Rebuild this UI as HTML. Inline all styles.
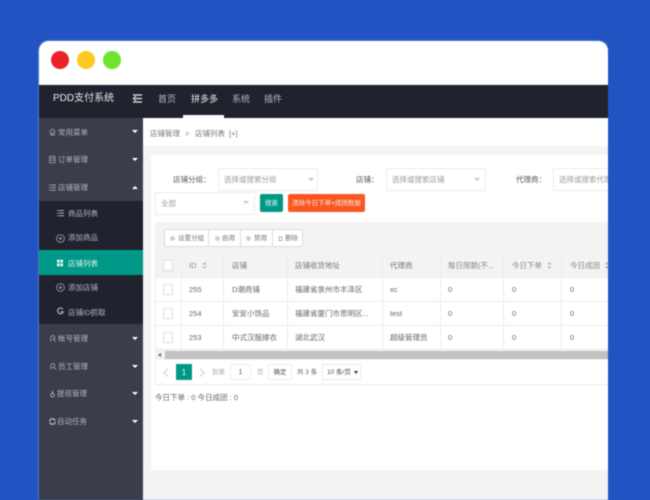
<!DOCTYPE html>
<html lang="zh">
<head>
<meta charset="utf-8">
<style>
html,body{margin:0;padding:0}
body{width:650px;height:500px;overflow:hidden;background:#2154c2;position:relative;font-family:"Liberation Sans","Noto Sans CJK SC",sans-serif}
#win{position:absolute;left:39px;top:41px;width:569px;height:459px;overflow:hidden;border-radius:10px 10px 0 0;background:#f3f3f3;box-shadow:0 0 2px rgba(255,255,255,.5)}
.a{position:absolute;white-space:nowrap}
#page{position:absolute;left:0;top:0;width:650px;height:500px;filter:blur(.45px)}
.dot{position:absolute;width:18px;height:18px;border-radius:50%;top:51px}
.t{font-size:7.5px;line-height:12px;color:#666}
.nav{font-size:9px;line-height:14px;color:#b6b8bd}
.m{font-size:7.5px;line-height:12px;color:#b4b6bc}
.arr{position:absolute;left:132px;width:0;height:0;border-left:3px solid transparent;border-right:3px solid transparent;border-top:3.5px solid #fff}
.box{position:absolute;background:#fff;border:1px solid #ececec;box-sizing:border-box}
.caret{position:absolute;width:0;height:0;border-left:3px solid transparent;border-right:3px solid transparent;border-top:3.5px solid #c4c4c4}
.ph{font-size:7.5px;line-height:12px;color:#9b9b9b}
.l{position:absolute;background:#ededed}
.cb{position:absolute;left:163px;width:10px;height:11px;box-sizing:border-box;background:#fff;border:1px solid #dcdcdc;border-radius:1px}
.s{font-size:6.5px;line-height:11px}
svg{position:absolute;overflow:visible}
</style>
</head>
<body>
<div id="page">
<div id="win"></div>
<div class="a" style="left:39px;top:41px;width:569px;height:43px;background:#fff;border-radius:10px 10px 0 0"></div>
<div class="dot" style="left:51px;background:#ea2327"></div>
<div class="dot" style="left:77px;background:#fcca20"></div>
<div class="dot" style="left:103px;background:#6fe62d"></div>

<!-- top nav -->
<div class="a" style="left:39px;top:85px;width:569px;height:33px;background:#20222e"></div>
<div class="a" style="left:53px;top:92px;font-size:10px;line-height:14px;color:#e8e8e8">PDD支付系统</div>
<svg style="left:133px;top:94px" width="10" height="10" viewBox="0 0 10 10"><path d="M0 1H9M3 4.500H9M0 8H9M3 2.500L0.500 4.500L3 6.500" fill="none" stroke="#f0f0f0" stroke-width="1.300"/></svg>
<div class="a nav" style="left:158px;top:92px">首页</div>
<div class="a nav" style="left:191px;top:92px;color:#f0f0f0">拼多多</div>
<div class="a nav" style="left:232px;top:92px">系统</div>
<div class="a nav" style="left:264px;top:92px">插件</div>
<div class="a" style="left:183px;top:115px;width:41px;height:3px;background:#fff"></div>

<!-- sidebar -->
<div class="a" style="left:39px;top:118px;width:104px;height:382px;background:#3a3e4a"></div>
<div class="a" style="left:39px;top:201px;width:104px;height:123px;background:#20222e"></div>
<div class="a" style="left:39px;top:250px;width:104px;height:25px;background:#009886"></div>

<svg style="left:49px;top:128px" width="7" height="8" viewBox="0 0 8 10"><path d="M0.500 4.500L4 1L7.500 4.500M1.500 4V9H6.500V4M3.200 9V6.500H4.800V9" fill="none" stroke="#a8aab0" stroke-width=".9"/></svg>
<div class="a m" style="left:58px;top:127px">常用菜单</div><div class="arr" style="top:130px"></div>
<svg style="left:49px;top:155px" width="7" height="9" viewBox="0 0 8 11"><path d="M0.500 1.500H7V9.500H0.500ZM0.500 4H7M0.500 6.500H7" fill="none" stroke="#a8aab0" stroke-width=".9"/></svg>
<div class="a m" style="left:58px;top:154px">订单管理</div><div class="arr" style="top:158px"></div>
<svg style="left:49px;top:184px" width="7" height="7" viewBox="0 0 8 8"><path d="M0 1H1.200M2 1H8M0 4H1.200M2 4H8M0 7H1.200M2 7H8" stroke="#b4b6bc" stroke-width="1"/></svg>
<div class="a m" style="left:58px;top:182px">店铺管理</div>
<div class="a" style="left:132px;top:186px;width:0;height:0;border-left:3px solid transparent;border-right:3px solid transparent;border-bottom:3.5px solid #fff"></div>

<svg style="left:57px;top:209px" width="7" height="8" viewBox="0 0 8 8"><path d="M0 1H1.200M2 1H8M0 4H1.200M2 4H8M0 7H1.200M2 7H8" stroke="#c4c6ca" stroke-width="1"/></svg>
<div class="a m" style="left:68px;top:208px">商品列表</div>
<svg style="left:56px;top:234px" width="9" height="9" viewBox="0 0 9 9"><circle cx="4.500" cy="4.500" r="3.900" fill="none" stroke="#a8aab0" stroke-width=".8"/><path d="M2.500 4.500H6.500M4.500 2.500V6.500" stroke="#a8aab0" stroke-width=".8"/></svg>
<div class="a m" style="left:68px;top:232px">添加商品</div>
<svg style="left:57px;top:259px" width="6" height="8" viewBox="0 0 8 9"><path d="M0 0H3.500V4H0ZM4.500 0H8V4H4.500ZM0 5H3.500V9H0ZM4.500 5H8V9H4.500Z" fill="#e8f5f3"/></svg>
<div class="a m" style="left:68px;top:258px;color:#e6f4f2">店铺列表</div>
<svg style="left:56px;top:283px" width="9" height="9" viewBox="0 0 9 9"><circle cx="4.500" cy="4.500" r="3.900" fill="none" stroke="#a8aab0" stroke-width=".8"/><path d="M2.500 4.500H6.500M4.500 2.500V6.500" stroke="#a8aab0" stroke-width=".8"/></svg>
<div class="a m" style="left:68px;top:282px">添加店铺</div>
<svg style="left:57px;top:308px" width="7" height="7" viewBox="0 0 8 8"><path d="M6.800 1.500A3.300 3.300 0 1 0 7.200 4.300H4" fill="none" stroke="#c4c6ca" stroke-width="1.200"/></svg>
<div class="a m" style="left:68px;top:307px">店铺ID抓取</div>

<svg style="left:49px;top:334px" width="8" height="9" viewBox="0 0 9 10"><path d="M2 8.500V4C2 1 6.500 1 6.500 4C6.500 5.500 5.500 6 4.500 6L8 8.500" fill="none" stroke="#a8aab0" stroke-width=".9"/></svg>
<div class="a m" style="left:58px;top:333px">帐号管理</div><div class="arr" style="top:337px"></div>
<svg style="left:49px;top:362px" width="8" height="9" viewBox="0 0 9 10"><path d="M2 8.500V4C2 1 6.500 1 6.500 4C6.500 5.500 5.500 6 4.500 6L8 8.500" fill="none" stroke="#a8aab0" stroke-width=".9"/></svg>
<div class="a m" style="left:58px;top:361px">员工管理</div><div class="arr" style="top:365px"></div>
<svg style="left:50px;top:390px" width="5" height="8" viewBox="0 0 7 10"><path d="M3.500 0.500V4M1 6.500A2.500 2.500 0 1 0 6 6.500A2.500 2.500 0 1 0 1 6.500" fill="none" stroke="#c4c6ca" stroke-width="1.100"/></svg>
<div class="a m" style="left:57px;top:388px">提现管理</div><div class="arr" style="top:392px"></div>
<svg style="left:49px;top:418px" width="7" height="7" viewBox="0 0 8 8"><path d="M0.800 4A3.200 3.200 0 0 1 7 3M7.200 4A3.200 3.200 0 0 1 1 5" fill="none" stroke="#c4c6ca" stroke-width="1.300"/></svg>
<div class="a m" style="left:57px;top:416px">自动任务</div><div class="arr" style="top:420px"></div>

<!-- content bg -->
<div class="a" style="left:143px;top:118px;width:465px;height:382px;background:#f3f3f3"></div>
<div class="a" style="left:143px;top:118px;width:465px;height:28px;background:#fff"></div>
<div class="a t" style="left:150px;top:128px;color:#777">店铺管理</div>
<div class="a t" style="left:185px;top:128px;color:#888">&gt;</div>
<div class="a t" style="left:195px;top:128px;color:#777">店铺列表</div>
<div class="a t" style="left:229px;top:128px;color:#777">[+]</div>

<!-- card -->
<div class="a" style="left:151px;top:155px;width:457px;height:315px;background:#fff"></div>

<!-- filters -->
<div class="a t" style="left:173px;top:174px;color:#555">店铺分组：</div>
<div class="box" style="left:218px;top:168px;width:100px;height:23px"></div>
<div class="a ph" style="left:224px;top:174px">选择或搜索分组</div>
<div class="caret" style="left:308px;top:178px"></div>

<div class="a t" style="left:356px;top:174px;color:#555">店铺：</div>
<div class="box" style="left:386px;top:168px;width:100px;height:23px"></div>
<div class="a ph" style="left:392px;top:174px">选择或搜索店铺</div>
<div class="caret" style="left:474px;top:178px"></div>

<div class="a t" style="left:516px;top:174px;color:#555">代理商：</div>
<div class="box" style="left:553px;top:168px;width:70px;height:23px"></div>
<div class="a ph" style="left:559px;top:174px">选择或搜索代理商</div>

<div class="box" style="left:155px;top:192px;width:100px;height:23px"></div>
<div class="a ph" style="left:161px;top:198px">全部</div>
<div class="caret" style="left:243px;top:201px"></div>
<div class="a" style="left:260px;top:194px;width:23px;height:18px;background:#009886;border-radius:2px;color:#e6f6f4;font-size:6.5px;line-height:19px;text-align:center">搜索</div>
<div class="a" style="left:288px;top:194px;width:77px;height:18px;background:#fb5723;border-radius:2px;color:#ffe9df;font-size:6.5px;line-height:19px;text-align:center">清除今日下单+成团数据</div>

<!-- table band -->
<div class="a" style="left:155px;top:222px;width:453px;height:138px;background:#fff"></div>
<div class="a" style="left:155px;top:222px;width:453px;height:55px;background:#f3f3f3"></div>
<div class="a" style="left:155px;top:252px;width:453px;height:1px;background:#ececec"></div>

<!-- toolbar -->
<div class="box" style="left:164px;top:229px;width:139px;height:18px;border-color:#dcdcdc;border-radius:2px"></div>
<div class="l" style="left:208px;top:230px;width:1px;height:16px;background:#dcdcdc"></div>
<div class="l" style="left:240px;top:230px;width:1px;height:16px;background:#dcdcdc"></div>
<div class="l" style="left:272px;top:230px;width:1px;height:16px;background:#dcdcdc"></div>
<svg style="left:170px;top:236px" width="5" height="5" viewBox="0 0 6 6"><circle cx="3" cy="3" r="2.600" fill="none" stroke="#999" stroke-width=".6"/><circle cx="3" cy="3" r="1" fill="#777"/></svg>
<div class="a s" style="left:178px;top:233px;color:#777">设置分组</div>
<svg style="left:215px;top:236px" width="5" height="5" viewBox="0 0 6 6"><circle cx="3" cy="3" r="2.600" fill="none" stroke="#999" stroke-width=".6"/><circle cx="3" cy="3" r="1" fill="#777"/></svg>
<div class="a s" style="left:222px;top:233px;color:#777">启用</div>
<svg style="left:246px;top:236px" width="5" height="5" viewBox="0 0 6 6"><circle cx="3" cy="3" r="2.600" fill="none" stroke="#999" stroke-width=".6"/><circle cx="3" cy="3" r="1" fill="#777"/></svg>
<div class="a s" style="left:254px;top:233px;color:#777">禁用</div>
<svg style="left:278px;top:236px" width="5" height="5" viewBox="0 0 6 6"><path d="M0.500 1H5.500M1.200 2V5.500H4.800V2" fill="none" stroke="#888" stroke-width=".7"/></svg>
<div class="a s" style="left:285px;top:233px;color:#777">删除</div>

<!-- table lines -->
<div class="l" style="left:155px;top:277px;width:453px;height:1px"></div>
<div class="l" style="left:155px;top:301px;width:453px;height:1px"></div>
<div class="l" style="left:155px;top:325px;width:453px;height:1px"></div>
<div class="l" style="left:155px;top:349px;width:453px;height:1px"></div>
<div class="l" style="left:155px;top:253px;width:1px;height:107px"></div>
<div class="l" style="left:181px;top:253px;width:1px;height:96px"></div>
<div class="l" style="left:223px;top:253px;width:1px;height:96px"></div>
<div class="l" style="left:287px;top:253px;width:1px;height:96px"></div>
<div class="l" style="left:382px;top:253px;width:1px;height:96px"></div>
<div class="l" style="left:440px;top:253px;width:1px;height:96px"></div>
<div class="l" style="left:503px;top:253px;width:1px;height:96px"></div>
<div class="l" style="left:561px;top:253px;width:1px;height:96px"></div>

<!-- header row -->
<div class="cb" style="top:260px"></div>
<div class="a t" style="left:189px;top:260px;color:#888">ID</div>
<svg style="left:202px;top:262px" width="5" height="7" viewBox="0 0 5 7"><path d="M2.500 0L4.500 2.500H0.500ZM2.500 7L0.500 4.500H4.500Z" fill="#b4b4b4"/></svg>
<div class="a t" style="left:232px;top:260px;color:#777">店铺</div>
<div class="a t" style="left:295px;top:260px;color:#777">店铺收货地址</div>
<div class="a t" style="left:390px;top:260px;color:#777">代理商</div>
<div class="a t" style="left:448px;top:260px;color:#888">每日限额(不...</div>
<div class="a t" style="left:512px;top:260px;color:#888">今日下单</div>
<svg style="left:547px;top:262px" width="5" height="7" viewBox="0 0 5 7"><path d="M2.500 0L4.500 2.500H0.500ZM2.500 7L0.500 4.500H4.500Z" fill="#b4b4b4"/></svg>
<div class="a t" style="left:570px;top:260px;color:#888">今日成团</div>
<svg style="left:604px;top:262px" width="5" height="7" viewBox="0 0 5 7"><path d="M2.500 0L4.500 2.500H0.500ZM2.500 7L0.500 4.500H4.500Z" fill="#b4b4b4"/></svg>

<!-- rows -->
<div class="cb" style="top:284px"></div>
<div class="a t" style="left:189px;top:284px">255</div>
<div class="a t" style="left:232px;top:284px">D潮商铺</div>
<div class="a t" style="left:295px;top:284px">福建省泉州市丰泽区</div>
<div class="a t" style="left:390px;top:284px">xc</div>
<div class="a t" style="left:448px;top:284px">0</div>
<div class="a t" style="left:512px;top:284px">0</div>
<div class="a t" style="left:570px;top:284px">0</div>

<div class="cb" style="top:308px"></div>
<div class="a t" style="left:189px;top:308px">254</div>
<div class="a t" style="left:232px;top:308px">安安小饰品</div>
<div class="a t" style="left:295px;top:308px">福建省厦门市思明区...</div>
<div class="a t" style="left:390px;top:308px">test</div>
<div class="a t" style="left:448px;top:308px">0</div>
<div class="a t" style="left:512px;top:308px">0</div>
<div class="a t" style="left:570px;top:308px">0</div>

<div class="cb" style="top:332px"></div>
<div class="a t" style="left:189px;top:332px">253</div>
<div class="a t" style="left:232px;top:332px">中式汉服嫁衣</div>
<div class="a t" style="left:295px;top:332px">湖北武汉</div>
<div class="a t" style="left:390px;top:332px">超级管理员</div>
<div class="a t" style="left:448px;top:332px">0</div>
<div class="a t" style="left:512px;top:332px">0</div>
<div class="a t" style="left:570px;top:332px">0</div>

<!-- scrollbar -->
<div class="a" style="left:155px;top:350px;width:453px;height:10px;background:#f1f1f1"></div>
<div class="a" style="left:165px;top:351px;width:443px;height:8px;background:#c1c1c1"></div>
<div class="a" style="left:158px;top:353px;width:0;height:0;border-top:2px solid transparent;border-bottom:2px solid transparent;border-right:3px solid #666"></div>

<!-- pagination -->
<div class="l" style="left:155px;top:384px;width:453px;height:1px"></div>
<div class="l" style="left:155px;top:360px;width:1px;height:25px"></div>
<svg style="left:163px;top:368px" width="6" height="9" viewBox="0 0 6 9"><path d="M5 0.500L1 4.500L5 8.500" fill="none" stroke="#d0d0d0" stroke-width="1"/></svg>
<div class="a" style="left:176px;top:364px;width:16px;height:16px;background:#009886;border-radius:1px;color:#e6f6f4;font-size:8px;line-height:17px;text-align:center">1</div>
<svg style="left:199px;top:368px" width="6" height="9" viewBox="0 0 6 9"><path d="M1 0.500L5 4.500L1 8.500" fill="none" stroke="#d0d0d0" stroke-width="1"/></svg>
<div class="a s" style="left:212px;top:367px;color:#aaa">到第</div>
<div class="box" style="left:230px;top:364px;width:21px;height:16px;text-align:center;font-size:7px;line-height:15px;color:#555">1</div>
<div class="a s" style="left:257px;top:367px;color:#aaa">页</div>
<div class="box" style="left:268px;top:364px;width:24px;height:16px;text-align:center;font-size:6.5px;line-height:15px;color:#555">确定</div>
<div class="a s" style="left:297px;top:367px;color:#666">共 3 条</div>
<div class="box" style="left:322px;top:364px;width:39px;height:16px;font-size:6.5px;line-height:15px;color:#555;padding-left:4px">10 条/页</div>
<div class="a" style="left:354px;top:371px;width:0;height:0;border-left:2px solid transparent;border-right:2px solid transparent;border-top:3px solid #333"></div>

<div class="a" style="left:155px;top:391px;font-size:7.5px;line-height:13px;color:#666">今日下单 : 0 今日成团 : 0</div>

<!-- right edge clip -->
<div class="a" style="left:608px;top:0;width:42px;height:500px;background:#2154c2"></div>
</div>
</body>
</html>
